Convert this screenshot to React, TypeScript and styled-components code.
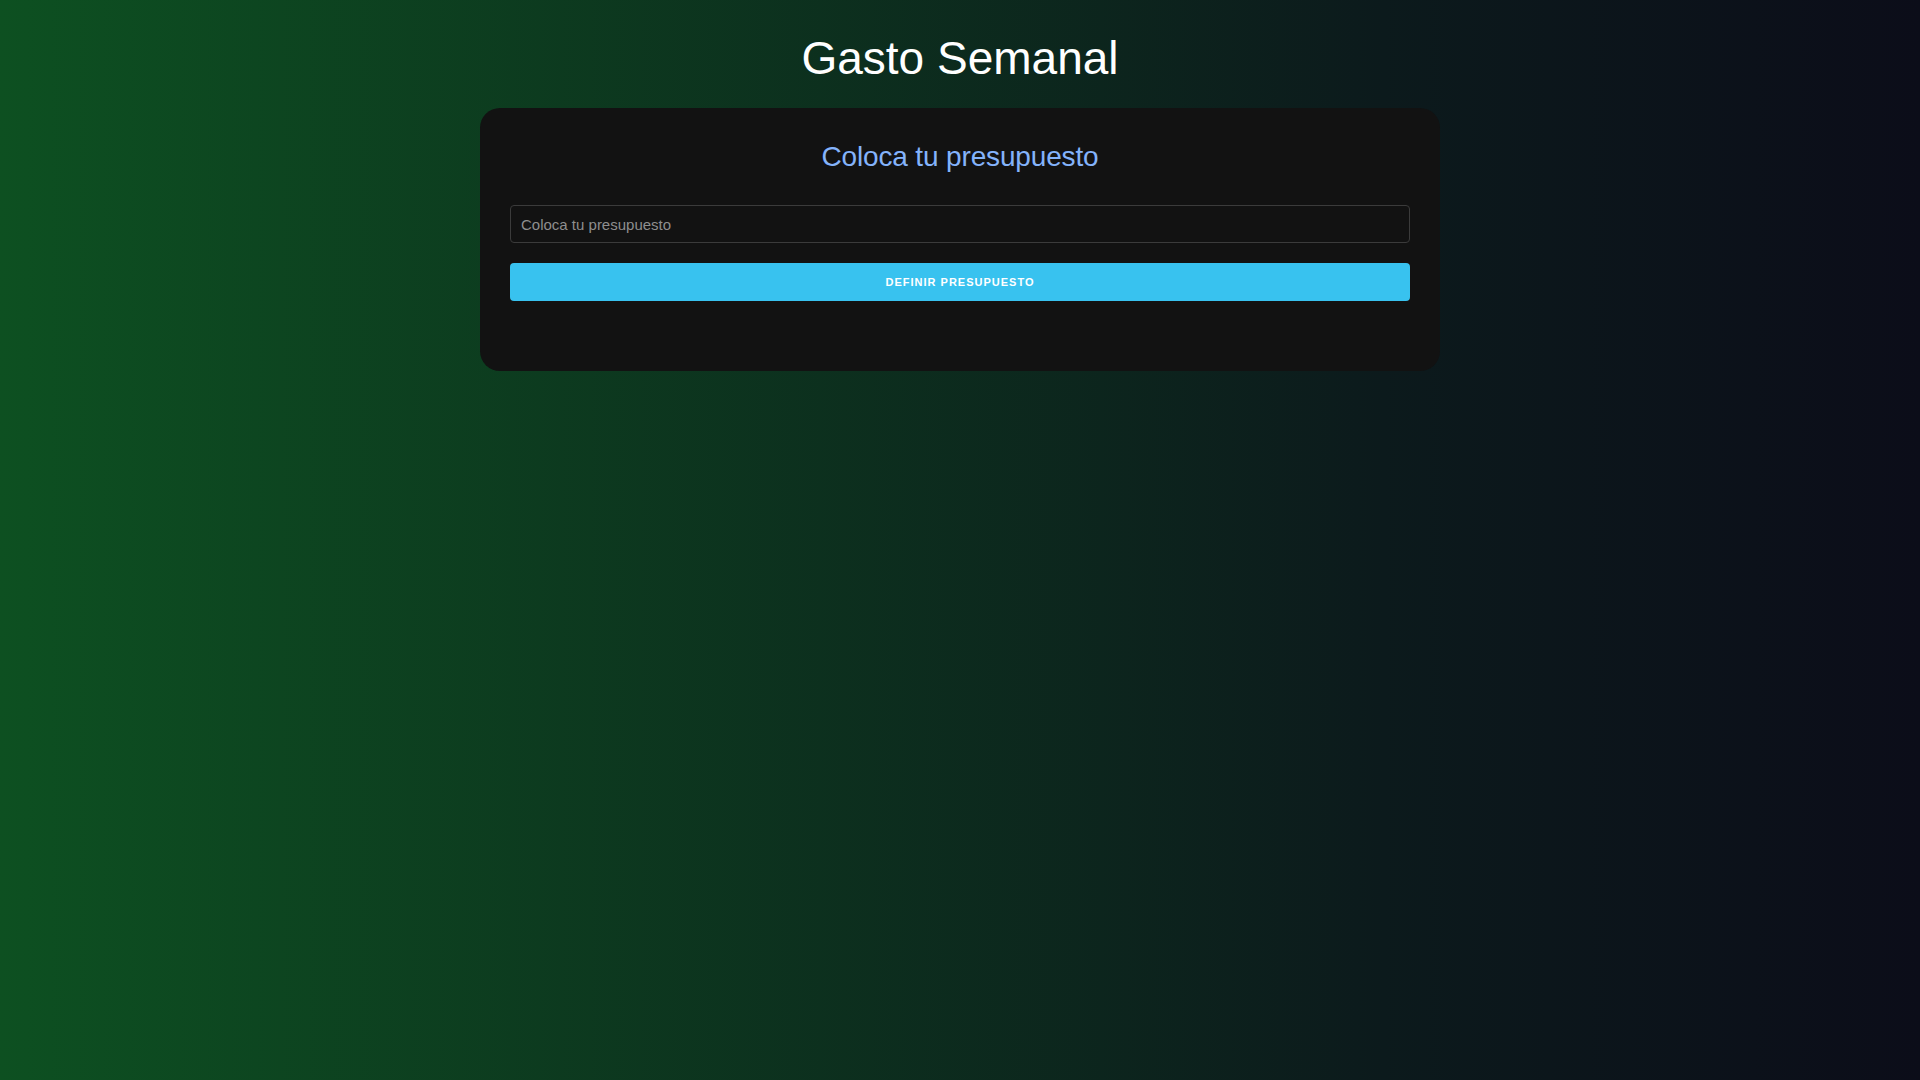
import React, { useState } from "react";
import styled, { createGlobalStyle } from "styled-components";

const GlobalStyle = createGlobalStyle`
  * { box-sizing: border-box; }
  html, body {
    margin: 0;
    padding: 0;
    min-height: 100%;
  }
  body {
    min-height: 100vh;
    font-family: "Liberation Sans", Arial, sans-serif;
    background: linear-gradient(90deg, #0d5021 0%, #0c1a1c 72%, #0c0d19 100%);
    background-attachment: fixed;
    color: #ffffff;
  }
`;

const Page = styled.main`
  min-height: 100vh;
  display: flex;
  flex-direction: column;
  align-items: center;
  padding-top: 31px;
`;

const Title = styled.h1`
  margin: 0 0 23px;
  font-family: "Liberation Sans", Arial, sans-serif;
  font-weight: 400;
  font-size: 46px;
  line-height: normal;
  color: #ffffff;
  text-align: center;
`;

const Card = styled.section`
  width: 960px;
  background: #121212;
  border-radius: 20px;
  padding: 33px 30px 70px;
  display: flex;
  flex-direction: column;
`;

const Subtitle = styled.h2`
  margin: 0 0 32px;
  font-family: "Liberation Sans", Arial, sans-serif;
  font-weight: 400;
  font-size: 28px;
  letter-spacing: -0.15px;
  line-height: normal;
  color: #84b3fb;
  text-align: center;
`;

const Form = styled.form`
  display: flex;
  flex-direction: column;
  gap: 20px;
`;

const Input = styled.input`
  width: 100%;
  height: 38px;
  padding: 0 10px;
  background: #121212;
  border: 1px solid #3b3b3b;
  border-radius: 4px;
  color: #e5e5e5;
  font-family: "Liberation Sans", Arial, sans-serif;
  font-size: 15px;
  outline: none;
  &::placeholder {
    color: #8e8e8e;
  }
`;

const Button = styled.button`
  width: 100%;
  height: 38px;
  border: none;
  border-radius: 4px;
  background: #38c2ef;
  color: #ffffff;
  font-family: "Liberation Sans", Arial, sans-serif;
  font-weight: 700;
  font-size: 11px;
  letter-spacing: 1px;
  text-transform: uppercase;
  cursor: pointer;
`;

export default function App() {
  const [value, setValue] = useState("");
  return (
    <>
      <GlobalStyle />
      <Page>
        <Title>Gasto Semanal</Title>
        <Card>
          <Subtitle>Coloca tu presupuesto</Subtitle>
          <Form onSubmit={(e) => e.preventDefault()}>
            <Input
              type="number"
              placeholder="Coloca tu presupuesto"
              value={value}
              onChange={(e) => setValue(e.target.value)}
            />
            <Button type="submit">Definir presupuesto</Button>
          </Form>
        </Card>
      </Page>
    </>
  );
}
